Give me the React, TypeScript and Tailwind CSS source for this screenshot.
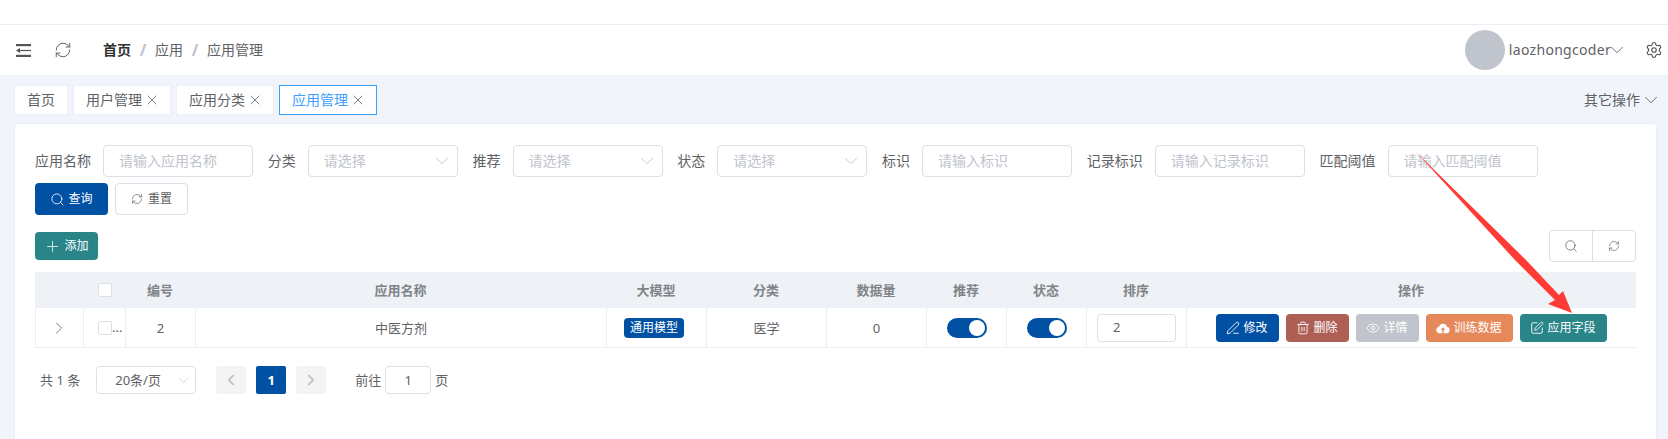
import { ChevronDown, ChevronLeft, ChevronRight, Eye, PenLine, Plus, RefreshCw, Search, Settings, SquarePen, Trash2, X } from 'lucide-react'
import React from 'react'

const colsClass = 'grid grid-cols-[48px_42px_70px_411px_100px_120px_100px_80px_80px_100px_450px]'

const MenuIcon = () => (
  <svg width="16" height="13" viewBox="0 0 16 13" fill="#555" className="shrink-0">
    <rect x="0" y="0" width="15" height="2.2" />
    <rect x="4" y="5.9" width="11" height="1.2" />
    <rect x="0" y="10.8" width="15" height="2.2" />
    <path d="M0 6.5l4-2.4v4.8z" />
  </svg>
)

const CloudIcon = () => (
  <svg width="14" height="14" viewBox="0 0 16 16" className="shrink-0">
    <path d="M4 14a3.8 3.8 0 0 1-.6-7.5 4.8 4.8 0 0 1 9.2 0A3.8 3.8 0 0 1 12 14z" fill="#fff" />
    <path d="M8 7l-2.6 3h1.8v4h1.6v-4h1.8z" fill="#e6895a" />
  </svg>
)

const Tab = ({ label, active, close = true }: { label: string; active?: boolean; close?: boolean }) => (
  <div
    className={`flex items-center h-[30px] pl-3 border bg-white ${close ? 'pr-[10px]' : 'pr-3'} ${
      active ? 'border-[#409eff] text-[#409eff]' : 'border-[#ebeef5] text-[#606266]'
    }`}
  >
    {label}
    {close && <X size={16} strokeWidth={1.2} className="ml-[2px] text-[#606266]" />}
  </div>
)

const TextField = ({ label, placeholder }: { label: string; placeholder: string }) => (
  <div className="flex items-center mr-[14.75px]">
    <span className="mr-3 text-[#606266]">{label}</span>
    <div className="flex items-center w-[150px] h-[32px] px-[15px] border border-[#dcdfe6] rounded-[4px] text-[#c0c4cc]">
      {placeholder}
    </div>
  </div>
)

const SelectField = ({ label }: { label: string }) => (
  <div className="flex items-center mr-[14.75px]">
    <span className="mr-3 text-[#606266]">{label}</span>
    <div className="flex items-center justify-between w-[150px] h-[32px] pl-[15px] pr-1 border border-[#dcdfe6] rounded-[4px] text-[#c0c4cc]">
      请选择
      <ChevronDown size={22} strokeWidth={1} />
    </div>
  </div>
)

const Switch = () => (
  <div className="flex items-center justify-end w-10 h-5 rounded-full bg-[#0050a3] pr-[2px]">
    <div className="w-4 h-4 rounded-full bg-white" />
  </div>
)

const ActionButton = ({ color, wide, icon, label }: { color: string; wide?: boolean; icon: React.ReactNode; label: string }) => (
  <div className={`flex items-center justify-center gap-[3px] h-7 rounded-[4px] text-white text-xs ${color} ${wide ? 'w-[87px]' : 'w-[63px]'}`}>
    {icon}
    {label}
  </div>
)

const HeaderCell = ({ children }: { children?: React.ReactNode }) => (
  <div className="flex items-center justify-center pt-px font-bold text-[#808488]">{children}</div>
)

const Cell = ({ children }: { children?: React.ReactNode }) => (
  <div className="flex items-center justify-center border-r border-[#ebeef5] text-[#606266]">{children}</div>
)

const App = () => {
  return (
    <div className="relative h-screen overflow-hidden bg-[#f1f4fb] text-sm font-['Noto_Sans','Noto_Sans_CJK_SC',sans-serif]">
      {/* top strip */}
      <div className="h-[25px] bg-white border-b border-[#ebeef5]" />

      {/* header */}
      <div className="flex items-center justify-between h-[50px] bg-white pl-4 pr-[5px]">
        <div className="flex items-center">
          <MenuIcon />
          <RefreshCw size={18} strokeWidth={1.2} className="ml-[22px] text-[#555]" />
          <div className="flex items-center ml-[31px] text-[#606266]">
            <span className="font-bold text-[#303133]">首页</span>
            <span className="w-6 text-center text-base font-bold text-[#c0c4cc]">/</span>
            <span>应用</span>
            <span className="w-6 text-center text-base font-bold text-[#c0c4cc]">/</span>
            <span>应用管理</span>
          </div>
        </div>
        <div className="flex items-center">
          <div className="w-10 h-10 rounded-full bg-[#c0c4cc]" />
          <span className="ml-1 tracking-[0.3px] text-[#606266]">laozhongcoder</span>
          <ChevronDown size={22} strokeWidth={1} className="-ml-[5px] text-[#606266]" />
          <Settings size={18} strokeWidth={1.5} className="ml-[17px] text-[#555]" />
        </div>
      </div>

      {/* tabs */}
      <div className="flex items-center justify-between h-[30px] mt-[10px] pl-[14px] pr-[6px]">
        <div className="flex gap-[5px]">
          <Tab label="首页" close={false} />
          <Tab label="用户管理" />
          <Tab label="应用分类" />
          <Tab label="应用管理" active />
        </div>
        <div className="flex items-center text-[#606266]">
          其它操作
          <ChevronDown size={22} strokeWidth={1} />
        </div>
      </div>

      {/* card */}
      <div className="ml-[14px] mt-2 w-[1643px] h-[400px] bg-white border border-[#ebeef5] rounded-[4px] pt-[21px] px-5">
        <div className="flex items-center">
          <TextField label="应用名称" placeholder="请输入应用名称" />
          <SelectField label="分类" />
          <SelectField label="推荐" />
          <SelectField label="状态" />
          <TextField label="标识" placeholder="请输入标识" />
          <TextField label="记录标识" placeholder="请输入记录标识" />
          <TextField label="匹配阈值" placeholder="请输入匹配阈值" />
        </div>

        <div className="flex gap-[7px] mt-[6px] text-xs">
          <div className="flex items-center justify-center gap-[3px] w-[73px] h-[32px] rounded-[4px] bg-[#0050a3] text-white">
            <Search size={15} strokeWidth={1.3} />
            查询
          </div>
          <div className="flex items-center justify-center gap-[5px] w-[73px] h-[32px] rounded-[4px] border border-[#dcdfe6] text-[#606266]">
            <RefreshCw size={12} strokeWidth={1.4} />
            重置
          </div>
        </div>

        <div className="flex items-center justify-between h-[32px] mt-[15px]">
          <div className="flex items-center justify-center gap-[3px] w-[63px] h-7 rounded-[4px] bg-[#2a8589] text-white text-xs">
            <Plus size={17} strokeWidth={1.1} />
            添加
          </div>
          <div className="flex h-[32px] border border-[#dcdfe6] rounded-[4px] text-[#606266]">
            <div className="flex items-center justify-center w-[43px] border-r border-[#dcdfe6]">
              <Search size={14} strokeWidth={1.3} />
            </div>
            <div className="flex items-center justify-center w-[42px]">
              <RefreshCw size={12} strokeWidth={1.3} />
            </div>
          </div>
        </div>

        {/* table */}
        <div className="mt-[10px] w-[1601px] text-[13px]">
          <div className={`${colsClass} h-[36px] bg-[#eef1f6]`}>
            <HeaderCell />
            <div className="flex items-center">
              <div className="ml-[15px] w-[14px] h-[14px] bg-white border border-[#dcdfe6] rounded-[2px]" />
            </div>
            <HeaderCell>编号</HeaderCell>
            <HeaderCell>应用名称</HeaderCell>
            <HeaderCell>大模型</HeaderCell>
            <HeaderCell>分类</HeaderCell>
            <HeaderCell>数据量</HeaderCell>
            <HeaderCell>推荐</HeaderCell>
            <HeaderCell>状态</HeaderCell>
            <HeaderCell>排序</HeaderCell>
            <HeaderCell>操作</HeaderCell>
          </div>
          <div className={`${colsClass} h-[40px] border-l border-b border-[#ebeef5]`}>
            <Cell>
              <ChevronRight size={20} strokeWidth={1} className="mr-[2px]" />
            </Cell>
            <div className="flex items-center border-r border-[#ebeef5] text-[#606266]">
              <div className="ml-[14px] w-[14px] h-[14px] border border-[#dcdfe6] rounded-[2px]" />
              <span className="leading-none">...</span>
            </div>
            <Cell><span className="pt-[2px]">2</span></Cell>
            <Cell><span className="pt-[2px]">中医方剂</span></Cell>
            <Cell>
              <div className="flex items-center justify-center mr-[5px] w-[60px] h-5 rounded-[4px] bg-[#0050a3] text-white text-xs">通用模型</div>
            </Cell>
            <Cell><span className="pt-[2px]">医学</span></Cell>
            <Cell><span className="pt-[2px]">0</span></Cell>
            <Cell>
              <Switch />
            </Cell>
            <Cell>
              <Switch />
            </Cell>
            <Cell>
              <div className="flex items-center w-[79px] h-7 px-[15px] border border-[#dcdfe6] rounded-[4px]">2</div>
            </Cell>
            <div className="flex items-center justify-center gap-[7px] pr-[2px]">
              <ActionButton color="bg-[#0050a3]" icon={<PenLine size={14} strokeWidth={1.5} />} label="修改" />
              <ActionButton color="bg-[#ad5f55]" icon={<Trash2 size={14} strokeWidth={1.5} />} label="删除" />
              <ActionButton color="bg-[#c0c4cc]" icon={<Eye size={14} strokeWidth={1.5} />} label="详情" />
              <ActionButton color="bg-[#e6895a]" wide icon={<CloudIcon />} label="训练数据" />
              <ActionButton color="bg-[#2a8589]" wide icon={<SquarePen size={14} strokeWidth={1.5} />} label="应用字段" />
            </div>
          </div>
        </div>

        {/* pagination */}
        <div className="flex items-center h-7 mt-[18px] pl-[5px] text-[13px] text-[#606266]">
          <span>共 1 条</span>
          <div className="flex items-center justify-between ml-4 w-[100px] h-7 pl-[18px] pr-[3px] border border-[#dcdfe6] rounded-[4px]">
            20条/页
            <ChevronDown size={17} strokeWidth={1} className="text-[#c0c4cc]" />
          </div>
          <div className="flex items-center justify-center ml-5 w-[30px] h-7 rounded-[2px] bg-[#f4f4f5] text-[#c0c4cc]">
            <ChevronLeft size={18} strokeWidth={2.4} />
          </div>
          <div className="flex items-center justify-center ml-[10px] w-[30px] h-7 rounded-[2px] bg-[#0050a3] text-white font-bold">1</div>
          <div className="flex items-center justify-center ml-[10px] w-[30px] h-7 rounded-[2px] bg-[#f4f4f5] text-[#c0c4cc]">
            <ChevronRight size={18} strokeWidth={2.4} />
          </div>
          <span className="ml-[29px]">前往</span>
          <div className="flex items-center justify-center ml-1 w-[46px] h-7 border border-[#dcdfe6] rounded-[4px]">1</div>
          <span className="ml-1">页</span>
        </div>
      </div>

      {/* red annotation arrow */}
      <svg className="absolute left-0 top-0 pointer-events-none" width="1668" height="439">
        <polygon points="1416,152 1526,260 1559,295 1563,291 1572,313 1548,304 1555,300 1515,260" fill="#ff3b36" />
      </svg>
    </div>
  )
}

export default App
